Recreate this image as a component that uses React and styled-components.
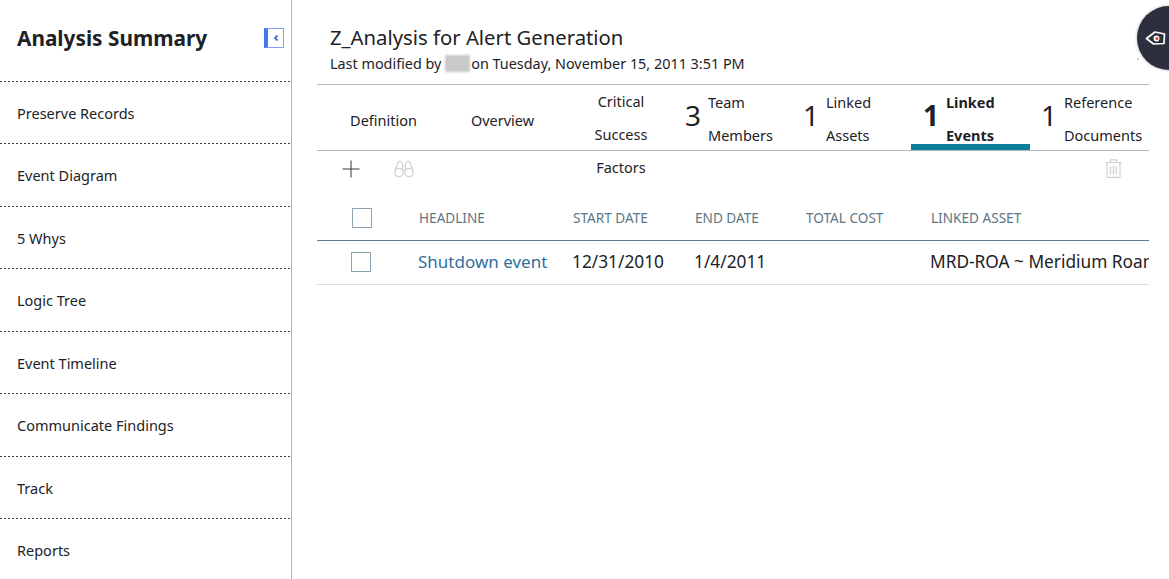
import React from 'react'
import styled, { css, createGlobalStyle } from 'styled-components'

const GlobalStyle = createGlobalStyle`
  html, body {
    margin: 0;
    height: 100%;
    background: #fff;
    overflow: hidden;
    font-family: "Noto Sans", Lato, sans-serif;
    color: #1d2226;
  }
  #root { height: 100%; }
`

const dottedLine = css`
  background-image: linear-gradient(to right, #3a3d40 50%, transparent 50%);
  background-size: 4px 1px;
  background-position: left bottom;
  background-repeat: repeat-x;
`

const Page = styled.div`
  display: flex;
  position: relative;
  width: 1169px;
  height: 579px;
  overflow: hidden;
`

const Sidebar = styled.aside`
  flex: none;
  box-sizing: border-box;
  width: 292px;
  height: 579px;
  border-right: 1px solid #b5b8bb;
`

const SideHeader = styled.div`
  display: flex;
  align-items: center;
  justify-content: space-between;
  box-sizing: border-box;
  height: 81.5px;
  padding: 0 7px 5px 17px;
  ${dottedLine}
`

const SideTitle = styled.h1`
  margin: 0;
  font-size: 20.8px;
  font-weight: 700;
`

const Collapse = styled.button`
  display: flex;
  align-items: center;
  justify-content: center;
  box-sizing: border-box;
  width: 20px;
  height: 20px;
  padding: 0;
  background: #fff;
  border: 1px solid #7fa5f0;
  border-left: 4px solid #3f7ae8;
`

const SideItem = styled.div`
  display: flex;
  align-items: center;
  box-sizing: border-box;
  height: 62.5px;
  padding-left: 17px;
  font-size: 14.5px;
  ${dottedLine}

  &:last-child {
    background: none;
  }
`

const Main = styled.main`
  flex: none;
  box-sizing: border-box;
  width: 832px;
  margin-left: 25px;
`

const TitleBlock = styled.div`
  box-sizing: border-box;
  height: 85px;
  padding: 22px 0 0 13px;
  border-bottom: 1px solid #b5b8bb;
`

const Title = styled.div`
  font-size: 20.3px;
  line-height: 30px;
`

const Modified = styled.div`
  display: flex;
  align-items: center;
  margin-top: 2px;
  font-size: 14.4px;
  line-height: 19px;
  white-space: pre;
`

const Redacted = styled.span`
  display: inline-block;
  width: 25px;
  height: 17px;
  margin-right: 1px;
  background: #c9c9c9;
  filter: blur(1px);
`

const Tabs = styled.nav`
  display: flex;
  box-sizing: border-box;
  height: 66px;
  border-bottom: 1px solid #b5b8bb;
`

const Tab = styled.div`
  display: flex;
  flex: none;
  justify-content: ${p => (p.$count ? 'flex-start' : 'center')};
  box-sizing: border-box;
  width: ${p => p.$width}px;
  height: 65px;
  padding-left: ${p => p.$pad || 0}px;
  border-bottom: 6px solid ${p => (p.$active ? '#0b7f9c' : 'transparent')};
  font-weight: ${p => (p.$active ? 700 : 400)};
`

const Count = styled.span`
  flex: none;
  align-self: center;
  width: 23px;
  font-size: 28px;
  line-height: 36px;
`

const TabLabel = styled.span`
  padding-top: ${p => p.$top}px;
  font-size: 14.5px;
  line-height: 33px;
  text-align: ${p => (p.$center ? 'center' : 'left')};
`

const Toolbar = styled.div`
  display: flex;
  align-items: center;
  box-sizing: border-box;
  height: 37px;
  padding: 0 27px 2px 25px;
`

const ToolIcon = styled.span`
  display: flex;
  margin-right: 34px;

  &:last-child {
    margin: 0 0 0 auto;
  }
`

const TableClip = styled.div`
  overflow: hidden;
  width: 832px;
  margin-top: 8px;
`

const Row = styled.div`
  display: grid;
  grid-template-columns: 101px 154px 122px 111px 125px 400px;
  align-items: center;
  width: 1013px;
  white-space: nowrap;
  height: ${p => p.$height}px;
  box-sizing: border-box;
  padding-bottom: ${p => p.$pad || 0}px;
  border-bottom: 1px solid ${p => p.$line};
`

const Heading = styled.div`
  padding: 0 0 2px 1px;
  font-size: 13.6px;
  color: #5d7686;
`

const Cell = styled.div`
  font-size: 17.3px;
  color: #1d2226;
`

const LinkCell = styled.div`
  font-size: 17px;
  color: #2f6f9f;
`

const Check = styled.div`
  box-sizing: border-box;
  width: 20px;
  height: 20px;
  margin-left: ${p => p.$left}px;
  border: 1px solid #8fa3ae;
`

const Fab = styled.div`
  position: absolute;
  top: 6px;
  left: 1137px;
  display: flex;
  align-items: center;
  box-sizing: border-box;
  width: 64px;
  height: 64px;
  padding-left: 8px;
  border-radius: 50%;
  background: #2d2f3f;
  box-shadow: 0 0 3px rgba(0, 0, 0, 0.35);
`

const FabSpeck = styled.span`
  position: absolute;
  top: 58px;
  left: 1137px;
  width: 2px;
  height: 2px;
  border-radius: 50%;
  background: #b9bcc0;
`

const tabs = [
  { width: 133, label: ['Definition'], top: 19 },
  { width: 105, label: ['Overview'], top: 19 },
  { width: 125, pad: 7, label: ['Critical', 'Success', 'Factors'], top: 0, center: true },
  { width: 119, pad: 5, count: 3, label: ['Team', 'Members'], top: 1 },
  { width: 112, pad: 4, count: 1, label: ['Linked', 'Assets'], top: 1 },
  { width: 119, pad: 12, count: 1, label: ['Linked', 'Events'], top: 1, active: true },
  { width: 119, pad: 11, count: 1, label: ['Reference', 'Documents'], top: 1 }
]

const menu = [
  'Preserve Records',
  'Event Diagram',
  '5 Whys',
  'Logic Tree',
  'Event Timeline',
  'Communicate Findings',
  'Track',
  'Reports'
]

const PlusIcon = () => (
  <svg width="18" height="18" viewBox="0 0 18 18" fill="none" stroke="#2c3a3c" strokeWidth="1">
    <path d="M9 0.5v17M0.5 9h17" />
  </svg>
)

const BinocularsIcon = () => (
  <svg width="20" height="18" viewBox="0 0 20 18" fill="none" stroke="#d0d3d5" strokeWidth="1.2">
    <circle cx="5" cy="12.5" r="4.2" />
    <circle cx="15" cy="12.5" r="4.2" />
    <path d="M1 11 3.5 3.5Q4.5 1 6.5 1.5T8.5 4v6M19 11 16.5 3.5Q15.5 1 13.5 1.5T11.5 4v6M8.5 6h3M8.5 10h3" />
  </svg>
)

const TrashIcon = () => (
  <svg width="17" height="19" viewBox="0 0 17 19" fill="none" stroke="#d0d3d5" strokeWidth="1.2">
    <path d="M0.5 3.5h16M2 3.5V18.4h13V3.5M5.500 3.5V0.8h6v2.7" />
    <path d="M5.5 7.5v8M8.5 6.5v9M11.5 7.5v8" strokeWidth="1.4" />
  </svg>
)

const App = () => (
  <Page>
    <GlobalStyle />
    <Sidebar>
      <SideHeader>
        <SideTitle>Analysis Summary</SideTitle>
        <Collapse aria-label="Collapse">
          <svg width="8" height="8" viewBox="0 0 8 8" fill="none" stroke="#4a6fe0" strokeWidth="1.8">
            <path d="M5.5 1.5 3 4l2.5 2.5" />
          </svg>
        </Collapse>
      </SideHeader>
      {menu.map(item => <SideItem key={item}>{item}</SideItem>)}
    </Sidebar>
    <Main>
      <TitleBlock>
        <Title>Z_Analysis for Alert Generation</Title>
        <Modified>Last modified by <Redacted />on Tuesday, November 15, 2011 3:51 PM</Modified>
      </TitleBlock>
      <Tabs>
        {tabs.map(tab => (
          <Tab key={tab.label.join()} $width={tab.width} $pad={tab.pad} $count={tab.count} $active={tab.active}>
            {tab.count && <Count>{tab.count}</Count>}
            <TabLabel $top={tab.top} $center={tab.center}>
              {tab.label.map(line => <div key={line}>{line}</div>)}
            </TabLabel>
          </Tab>
        ))}
      </Tabs>
      <Toolbar>
        <ToolIcon><PlusIcon /></ToolIcon>
        <ToolIcon><BinocularsIcon /></ToolIcon>
        <ToolIcon><TrashIcon /></ToolIcon>
      </Toolbar>
      <TableClip>
        <Row $height={45} $line="#5f7a8c">
          <Check $left={35} />
          <Heading>HEADLINE</Heading>
          <Heading>START DATE</Heading>
          <Heading>END DATE</Heading>
          <Heading>TOTAL COST</Heading>
          <Heading>LINKED ASSET</Heading>
        </Row>
        <Row $height={44} $pad={2} $line="#d8dde0">
          <Check $left={34} />
          <LinkCell>Shutdown event</LinkCell>
          <Cell>12/31/2010</Cell>
          <Cell>1/4/2011</Cell>
          <Cell />
          <Cell>MRD-ROA ~ Meridium Roanoke</Cell>
        </Row>
      </TableClip>
    </Main>
    <FabSpeck />
    <Fab>
      <svg width="22" height="16" viewBox="0 0 22 16" fill="none">
        <path d="M1.5 8.5 10 2l9.5 2-.5 9.500-10.500.5z" stroke="#fff" strokeWidth="1.7" strokeLinejoin="round" />
        <circle cx="11.5" cy="8.5" r="3" fill="#fff" />
        <circle cx="12" cy="8.5" r="1.5" fill="#c8562a" />
      </svg>
    </Fab>
  </Page>
)

export default App
